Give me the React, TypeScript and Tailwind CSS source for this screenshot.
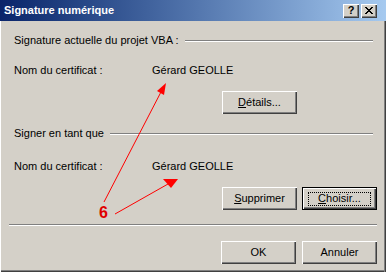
const bevel =
  "shadow-[inset_1px_1px_#ffffff,inset_-1px_-1px_#404040,inset_-2px_-2px_#808080]";

const Btn = ({ children, isDefault }: { children: React.ReactNode; isDefault?: boolean }) => {
  if (isDefault) {
    return (
      <div className="w-[75px] h-[23px] border border-black bg-[#d4d0c8]">
        <div className={`w-full h-full flex items-center justify-center ${bevel}`}>
          <span className="w-[63px] h-[14px] flex items-center justify-center border border-dotted border-black">
            <span>{children}</span>
          </span>
        </div>
      </div>
    );
  }
  return (
    <div className={`w-[75px] h-[23px] flex items-center justify-center bg-[#d4d0c8] ${bevel}`}>
      <span>{children}</span>
    </div>
  );
};

const Etched = ({ className = "" }: { className?: string }) => (
  <div className={`h-[2px] border-t border-t-[#808080] border-b border-b-white ${className}`} />
);

const Annotations = () => (
  <svg className="absolute inset-0 pointer-events-none" width="386" height="272">
    <line x1="104" y1="202" x2="162" y2="90" stroke="#ff0000" strokeWidth="1" />
    <polygon points="166,83 164,95 157,91" fill="#ff0000" />
    <line x1="115" y1="214" x2="168" y2="184" stroke="#ff0000" strokeWidth="1" />
    <polygon points="163,179 178,179 171,188" fill="#ff0000" />
  </svg>
);

export default function App() {
  return (
    <div
      className="relative w-[386px] h-[272px] bg-[#d4d0c8] flex flex-col text-[11px] text-black overflow-hidden"
      style={{ fontFamily: '"Liberation Sans", Arial, sans-serif' }}
    >
      <div className="h-[21px] shrink-0 flex items-center pl-[4px] pr-[9px] bg-gradient-to-r from-[#0a246a] to-[#a6caf0]">
        <span className="flex-1 text-white font-bold text-[11px]">Signature numérique</span>
        <div className="flex gap-[2px]">
          <div className={`w-[16px] h-[14px] flex items-center justify-center font-bold text-[11px] leading-none ${bevel} bg-[#d4d0c8]`}>
            ?
          </div>
          <div className={`w-[16px] h-[14px] flex items-center justify-center ${bevel} bg-[#d4d0c8]`}>
            <svg width="8" height="7" viewBox="0 0 8 7">
              <path d="M0 0L7 7M1 0L8 7M7 0L0 7M8 0L1 7" stroke="#000" strokeWidth="1" />
            </svg>
          </div>
        </div>
      </div>

      <div className="flex-1 flex flex-col px-[9px] shadow-[inset_1px_0_#ffffff,inset_-1px_0_#404040,inset_-2px_0_#808080,inset_0_-1px_#404040,inset_0_-2px_#808080]">
        <div className="mt-[13px] h-[13px] flex items-center pl-[5px] pr-[4px] gap-[6px]">
          <span className="leading-[13px]">Signature actuelle du projet VBA :</span>
          <Etched className="flex-1" />
        </div>
        <div className="mt-[17px] h-[13px] flex items-center pl-[5px]">
          <span className="w-[138px]">Nom du certificat :</span>
          <span>Gérard GEOLLE</span>
        </div>
        <div className="mt-[14px] flex pl-[213px]">
          <Btn>
            <span className="underline">D</span>étails...
          </Btn>
        </div>

        <div className="mt-[13px] h-[13px] flex items-center pl-[5px] pr-[4px] gap-[6px]">
          <span className="leading-[13px]">Signer en tant que</span>
          <Etched className="flex-1" />
        </div>
        <div className="mt-[20px] h-[13px] flex items-center pl-[5px]">
          <span className="w-[138px]">Nom du certificat :</span>
          <span>Gérard GEOLLE</span>
        </div>
        <div className="mt-[14px] flex justify-end gap-[5px]">
          <Btn>
            <span className="underline">S</span>upprimer
          </Btn>
          <Btn isDefault>
            <span className="underline">C</span>hoisir...
          </Btn>
        </div>

        <Etched className="mt-[14px]" />

        <div className="mt-[15px] flex justify-end gap-[6px]">
          <Btn>OK</Btn>
          <Btn>Annuler</Btn>
        </div>
      </div>

      <span className="absolute left-[99px] top-[205px] text-[#e00000] font-bold text-[16px] leading-none">
        6
      </span>
      <Annotations />
    </div>
  );
}
